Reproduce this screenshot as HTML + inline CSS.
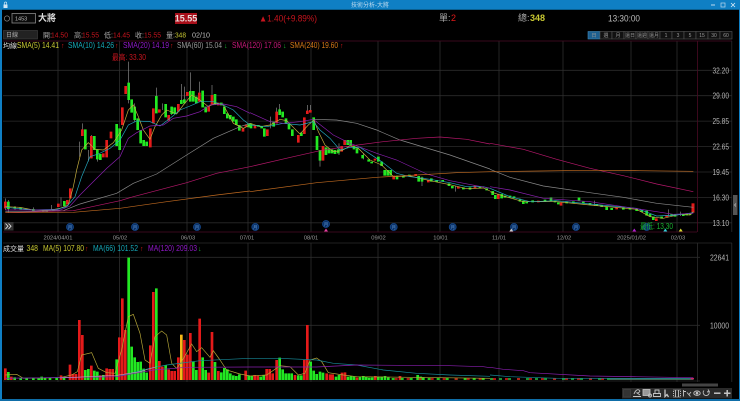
<!DOCTYPE html>
<html><head><meta charset="utf-8"><style>
html,body{margin:0;padding:0;background:#000;width:740px;height:401px;overflow:hidden}
svg{display:block;filter:blur(.3px)}
text{font-family:"Liberation Sans","Noto Sans CJK TC",sans-serif;font-size:8px}
.a{fill:#aaa}.r{fill:#c8141e}.y{fill:#c8c832}
.b text{font-size:5px;fill:#999}
.d text{font-size:5.8px;fill:#999}
.p text{font-size:8px;fill:#b4b4b4}
.m text{font-size:4.5px;fill:#5a90cc}
.f{fill:none}
</style></head><body>
<svg width="740" height="401" viewBox="0 0 740 401" xmlns="http://www.w3.org/2000/svg">
<rect width="740" height="401" fill="#000"/>
<!-- window chrome -->
<rect width="740" height="10" fill="#0f7fc4"/>
<rect y="9" width="740" height="1" fill="#0a5f90"/>
<rect y="0" width="2" height="401" fill="#0f7fc4"/>
<rect x="739" y="0" width="1" height="401" fill="#0f7fc4"/>
<rect y="399" width="740" height="2" fill="#0f6ea8"/>
<rect x="3.5" y="4.5" width="4" height="3.5" fill="#cfe6f5"/>
<path d="M4.3 4.5V3.2a1.2 1.2 0 0 1 2.4 0V4.5" class="f" stroke="#cfe6f5" stroke-width=".7"/>
<text x="370" y="7.2" text-anchor="middle" style="font-size:6px" fill="#bcd9ee">技術分析-大將</text>
<path d="M711 5h4" stroke="#bcd9ee"/><rect x="721" y="3" width="4" height="4" class="f" stroke="#bcd9ee" stroke-width=".7"/><path d="M731 3l4 4M735 3l-4 4" stroke="#dcecf7" stroke-width=".8"/>
<!-- row 1 -->
<circle cx="7" cy="18.5" r="2.6" class="f" stroke="#888" stroke-width=".7"/>
<rect x="12" y="13.5" width="23.5" height="9.5" fill="#0a0a0a" stroke="#888" stroke-width=".8"/>
<text x="15" y="20.5" style="font-size:5.5px" fill="#bbb">1453</text>
<text x="38" y="21" style="font-size:9px;font-weight:bold" fill="#ddd">大將</text>
<rect x="175" y="13" width="22" height="11" fill="#a80f1a"/>
<text x="186" y="21.5" text-anchor="middle" style="font-size:9px;font-weight:bold" fill="#e8d8d8">15.55</text>
<text x="259" y="21.5" style="font-size:9px" class="r" textLength="58" lengthAdjust="spacingAndGlyphs">▲1.40(+9.89%)</text>
<text x="439" y="21" style="font-size:9px" class="a">單:</text><text x="451" y="21" style="font-size:9px" fill="#e01818">2</text>
<text x="518" y="21" style="font-size:9px" class="a">總:</text><text x="530" y="21" style="font-size:9px;font-weight:bold" class="y">348</text>
<text x="608" y="21.5" style="font-size:9px" fill="#bbb" textLength="32" lengthAdjust="spacingAndGlyphs">13:30:00</text>
<!-- row 2 -->
<rect x="3.5" y="30.5" width="34" height="8.5" fill="#222" stroke="#444" stroke-width=".6"/>
<text x="6" y="37" style="font-size:6px" fill="#aaa">日線</text>
<text x="43" y="37.5" style="font-size:7px" class="a">開:</text><text x="51" y="37.5" style="font-size:7px" class="r" textLength="17" lengthAdjust="spacingAndGlyphs">14.50</text>
<text x="74" y="37.5" style="font-size:7px" class="a">高:</text><text x="82" y="37.5" style="font-size:7px" class="r" textLength="17" lengthAdjust="spacingAndGlyphs">15.55</text>
<text x="104" y="37.5" style="font-size:7px" class="a">低:</text><text x="113" y="37.5" style="font-size:7px" class="r" textLength="17" lengthAdjust="spacingAndGlyphs">14.45</text>
<text x="135" y="37.5" style="font-size:7px" class="a">收:</text><text x="144" y="37.5" style="font-size:7px" class="r" textLength="17" lengthAdjust="spacingAndGlyphs">15.55</text>
<text x="166" y="37.5" style="font-size:7px" class="a">量:</text><text x="175" y="37.5" style="font-size:7px" class="y" textLength="11" lengthAdjust="spacingAndGlyphs">348</text>
<text x="192" y="37.5" style="font-size:7px" fill="#bbb" textLength="18" lengthAdjust="spacingAndGlyphs">02/10</text>
<!-- range buttons -->
<g fill="#111" stroke="#555" stroke-width=".6">
<rect x="588" y="31.5" width="12" height="7.5" fill="#1d5f8f" stroke="#3f88b8"/><rect x="600" y="31.5" width="12" height="7.5"/><rect x="612" y="31.5" width="12" height="7.5"/><rect x="624" y="31.5" width="12" height="7.5"/><rect x="636" y="31.5" width="12" height="7.5"/><rect x="648" y="31.5" width="12" height="7.5"/><rect x="660" y="31.5" width="12" height="7.5"/><rect x="672" y="31.5" width="12" height="7.5"/><rect x="684" y="31.5" width="12" height="7.5"/><rect x="696" y="31.5" width="12" height="7.5"/><rect x="708" y="31.5" width="12" height="7.5"/><rect x="720" y="31.5" width="12" height="7.5"/>
</g>
<g text-anchor="middle" class="b">
<text x="594" y="37.2">日</text><text x="606" y="37.2">週</text><text x="618" y="37.2">月</text><text x="630" y="37.2">還日</text><text x="642" y="37.2">還週</text><text x="654" y="37.2">還月</text><text x="666" y="37.2">1</text><text x="678" y="37.2">3</text><text x="690" y="37.2">5</text><text x="702" y="37.2">15</text><text x="714" y="37.2">30</text><text x="726" y="37.2">60</text>
</g>
<!-- grid -->
<path d="M3 70.3H732M3 95.7H732M3 121.1H732M3 146.6H732M3 172H732M3 197.4H732M3 222.8H732M3 257.3H700M3 325.3H700" stroke="#2b2b2b" stroke-width=".8"/>
<path d="M58 41V232M119.5 41V232M187 41V232M248 41V232M311 41V232M378 41V232M440 41V232M499 41V232M563 41V232M631 41V232M677 41V232M58 243V382M119.5 243V382M187 243V382M248 243V382M311 243V382M378 243V382M440 243V382M499 243V382M563 243V382M631 243V382M677 243V382" stroke="#333" stroke-width=".7"/>
<path d="M3 41H732M3 232H697M697.5 41V232" stroke="#4a0b24" stroke-width=".8"/>
<path d="M697.5 243V382M3 243H732M731.8 41V232M731.8 243V382M3 381H700" stroke="#2c2c2c" stroke-width=".8"/>
<!-- legend -->
<text x="3" y="48" style="font-size:7px" fill="#ddd">均線:</text>
<text x="17" y="48" class="y" textLength="42" lengthAdjust="spacingAndGlyphs">SMA(5) 14.41</text><text x="61" y="48" style="font-size:7px" fill="#d01818">↑</text>
<text x="68" y="48" fill="#16a8b8" textLength="46" lengthAdjust="spacingAndGlyphs">SMA(10) 14.26</text><text x="115" y="48" style="font-size:7px" fill="#d01818">↑</text>
<text x="123" y="48" fill="#9018c8" textLength="46" lengthAdjust="spacingAndGlyphs">SMA(20) 14.19</text><text x="170" y="48" style="font-size:7px" fill="#d01818">↑</text>
<text x="177" y="48" fill="#999" textLength="45" lengthAdjust="spacingAndGlyphs">SMA(60) 15.04</text><text x="224" y="48" style="font-size:7px" fill="#18b030">↓</text>
<text x="232" y="48" fill="#c81878" textLength="49" lengthAdjust="spacingAndGlyphs">SMA(120) 17.06</text><text x="283" y="48" style="font-size:7px" fill="#18b030">↓</text>
<text x="290" y="48" fill="#d87818" textLength="48" lengthAdjust="spacingAndGlyphs">SMA(240) 19.60</text><text x="340" y="48" style="font-size:7px" fill="#d01818">↑</text>
<text x="112" y="60" class="r" textLength="34" lengthAdjust="spacingAndGlyphs">最高: 33.30</text>
<!-- price axis -->
<g class="p"><text x="712.500" y="73.300" textLength="16.500" lengthAdjust="spacingAndGlyphs">32.20</text><text x="712.500" y="98.700" textLength="16.500" lengthAdjust="spacingAndGlyphs">29.00</text><text x="712.500" y="124.100" textLength="16.500" lengthAdjust="spacingAndGlyphs">25.85</text><text x="712.500" y="149.600" textLength="16.500" lengthAdjust="spacingAndGlyphs">22.65</text><text x="712.500" y="175" textLength="16.500" lengthAdjust="spacingAndGlyphs">19.45</text><text x="712.500" y="200.400" textLength="16.500" lengthAdjust="spacingAndGlyphs">16.30</text><text x="712.500" y="225.800" textLength="16.500" lengthAdjust="spacingAndGlyphs">13.10</text></g>
<g class="d" text-anchor="middle"><text x="58" y="239.300">2024/04/01</text><text x="120" y="239.300">05/02</text><text x="188" y="239.300">06/03</text><text x="247" y="239.300">07/01</text><text x="311" y="239.300">08/01</text><text x="378.500" y="239.300">09/02</text><text x="440.500" y="239.300">10/01</text><text x="499" y="239.300">11/01</text><text x="564" y="239.300">12/02</text><text x="631.500" y="239.300">2025/01/02</text><text x="678" y="239.300">02/03</text></g>
<!-- candles zone 1 -->
<g transform="translate(0,60) scale(.33333)" fill="none">
<path stroke="#8a8a8a" stroke-width="2" d="M16 415V450M25 420V458M45 438V450M100 442V455M155 435V450M183 412V440M238 245V290M247 190V210M265 270V305M274 225V295M292 268V305M386 5V70M386 118V130M469 83V110M487 130V150M515 140V165M544 72V122M553 80V120M571 37V95M598 65V100M636 75V105M404 130V185"/>
<path stroke="#e41a1a" stroke-width="8" d="M16 425V445M175 431V441M202 420V434M211 385V415M247 208V228M274 228V295M310 280V292M320 240V292M333 215V235M367 142V195M377 78V102M451 205V262M460 145V190M478 148V158M506 165V182M535 132V155M562 96V108M598 98V125M626 140V155M636 105V135M729 205V215M738 195V200M655 128V136"/>
<path stroke="#22e822" stroke-width="8" d="M25 425V447M44 441V446M62 443V448M80 446V450M100 447V453M130 450V456M140 450V456M160 447V452M193 423V438M256 208V268M283 228V270M292 268V298M301 282V300M350 192V258M359 205V270M386 68V120M395 118V158M404 140V180M413 175V210M422 210V250M431 240V258M440 245V258M469 108V160M497 132V172M515 140V162M524 142V162M544 120V132M553 118V130M571 93V125M580 93V125M589 110V130M608 92V142M617 140V157M645 102V135M664 128V136M673 140V162M682 160V175M691 165V178M700 170V185M709 178V195M718 195V212M746 190V202"/>
<path stroke="#c8b040" stroke-width="2" d="M16 440L60 442L100 450L140 452L180 445L205 435L220 380L230 330L245 270L265 248L285 268L310 270L340 248L365 210L385 150L400 135L415 170L430 210L450 238L465 200L485 165L500 150L530 162L550 135L575 105L600 120L625 140L645 130L670 135L700 190L730 205L750 195"/>
<path stroke="#23a8c0" stroke-width="2" d="M16 442L100 450L170 448L200 440L225 410L245 350L270 290L295 282L330 265L360 240L385 195L410 183L450 185L480 198L510 175L540 150L570 138L600 125L640 125L670 135L700 150L730 180L750 195"/>
<path stroke="#8a1fb0" stroke-width="2" d="M16 450L180 450L210 438L240 405L280 365L320 325L360 290L385 235L410 218L450 198L490 195L520 175L560 168L600 155L630 135L670 132L710 140L750 160"/>
<path stroke="#8a8a8a" stroke-width="2" d="M16 455L190 452L240 432L350 400L400 370L470 342L560 285L640 235L720 200L750 190"/>
<path stroke="#b8186c" stroke-width="2" d="M16 458L220 452L360 422L400 410L560 368L650 340L750 320"/>
<path stroke="#c06a20" stroke-width="2" d="M16 458L220 457L360 445L500 425L650 405L750 393"/>
</g>
<!-- candles zone 2 -->
<g transform="translate(250,60) scale(.33333)" fill="none">
<path stroke="#8a8a8a" stroke-width="2" d="M62 170V205M80 143V190M89 132V150M172 135V155M181 135V155M210 300V320M267 250V285M340 280V298M516 350V378M616 378V395"/>
<path stroke="#e41a1a" stroke-width="8" d="M15 195V205M52 208V228M80 155V190M145 225V248M163 172V222M172 152V162M181 150V158M219 258V302M275 258V275M284 240V255M375 296V302M431 347V358M497 342V348M535 360V367M625 380V386M675 377V384"/>
<path stroke="#22e822" stroke-width="8" d="M3 190V205M25 195V200M35 198V205M43 205V230M71 185V200M89 148V165M98 155V172M108 175V192M117 192V208M127 208V228M154 218V228M191 172V210M201 228V270M210 270V302M228 262V285M237 265V280M246 268V280M255 270V282M265 268V280M293 240V255M302 240V258M312 258V268M321 265V280M338 285V295M356 298V305M365 305V310M385 290V305M395 305V318M404 330V347M413 330V347M422 330V347M441 347V358M460 347V353M478 344V350M506 348V365M516 352V365M544 355V365M560 360V366M578 360V365M597 370V378M607 378V385M640 382V388M660 382V389M690 379V385M710 385V391"/>
<path stroke="#c8b040" stroke-width="2" d="M0 190L30 200L60 195L90 178L110 182L150 222L175 195L192 180L205 215L225 255L250 275L275 272L300 258L325 265L360 300L395 315L430 350L480 348L540 362L600 374L650 386L700 384L720 393"/>
<path stroke="#23a8c0" stroke-width="2" d="M0 195L50 200L100 190L150 195L190 185L210 210L240 235L270 270L300 262L330 262L395 305L440 340L480 350L540 358L600 368L650 380L700 380L720 385"/>
<path stroke="#8a1fb0" stroke-width="2" d="M0 158L60 185L100 190L150 185L190 178L250 225L300 250L380 280L440 300L530 342L600 362L720 385"/>
<path stroke="#8a8a8a" stroke-width="2" d="M190 178L260 180L320 190L380 210L450 240L600 285L720 327"/>
<path stroke="#b8186c" stroke-width="2" d="M0 320L130 290L210 272L300 258L400 245L500 235L570 231L650 238L720 252"/>
<path stroke="#c06a20" stroke-width="2" d="M0 395L200 368L380 352L500 345L620 338L720 335"/>
</g>
<!-- candles zone 3 -->
<g transform="translate(490,60) scale(.33333)" fill="none">
<path stroke="#8a8a8a" stroke-width="2" d="M313 422V438M535 448V470M572 455V468M90 415V425"/>
<path stroke="#e41a1a" stroke-width="8" d="M25 403V417M145 422V427M213 428V437M380 443V448M499 475V483M530 465V471"/>
<path stroke="#22e822" stroke-width="8" d="M8 393V405M16 405V417M35 402V415M45 407V413M60 407V413M72 409V415M90 418V425M100 422V432M110 424V430M128 421V427M165 419V425M183 413V423M195 421V427M205 427V433M230 424V430M250 424V430M267 413V422M280 425V431M300 429V435M320 432V438M335 435V441M350 440V450M365 444V450M400 443V449M420 443V449M440 447V453M455 450V456M470 452V467M480 462V470M490 470V480M515 470V476M545 462V468M555 462V470M580 462V468M590 460V466M600 459V465"/>
<path stroke="#e41a1a" stroke-width="9" d="M609 430V458"/>
<path stroke="#c8b040" stroke-width="2" d="M0 395L40 408L100 425L200 425L300 435L440 448L480 470L520 475L570 463L600 465L610 455"/>
<path stroke="#23a8c0" stroke-width="2" d="M0 385L60 410L120 425L200 422L300 432L440 445L500 468L560 465L610 458"/>
<path stroke="#8a1fb0" stroke-width="2" d="M0 380L60 390L160 415L300 425L400 440L500 455L550 463L610 460"/>
<path stroke="#8a8a8a" stroke-width="2" d="M0 328L60 352L160 378L300 398L400 412L500 430L610 442"/>
<path stroke="#b8186c" stroke-width="2" d="M0 250L100 268L200 298L300 325L400 347L500 372L610 395"/>
<path stroke="#c06a20" stroke-width="2" d="M0 335L150 333L300 331L450 332L610 334"/>
</g>
<!-- markers -->
<g fill="#0b3268" stroke="#154a90" stroke-width=".8">
<circle cx="70" cy="227" r="3.500"/><circle cx="135" cy="227" r="3.500"/><circle cx="197" cy="227" r="3.500"/><circle cx="255.300" cy="227" r="3.500"/><circle cx="326" cy="224" r="3.500"/><circle cx="393.700" cy="227" r="3.500"/><circle cx="452.700" cy="227" r="3.500"/><circle cx="514" cy="227" r="3.500"/><circle cx="576" cy="227" r="3.500"/><circle cx="646.700" cy="227" r="3.500"/>
</g>
<g text-anchor="middle" class="m">
<text x="70" y="228.800">月</text><text x="135" y="228.800">月</text><text x="197" y="228.800">月</text><text x="255.300" y="228.800">月</text><text x="326" y="225.800">月</text><text x="393.700" y="228.800">月</text><text x="452.700" y="228.800">月</text><text x="514" y="228.800">月</text><text x="576" y="228.800">月</text>
</g>
<text x="640" y="229" fill="#18b030" textLength="33" lengthAdjust="spacingAndGlyphs">最低: 13.30</text>
<path d="M326 228.500l-2 3h4z" fill="#e040a0"/><path d="M511.300 228.500l-2 3h4z" fill="#ccc"/><path d="M634.300 228.500l-2 3h4z" fill="#b020d0"/><path d="M665.300 228.500l-2 3h4z" fill="#30d0d8"/><path d="M680.700 228.500l-2 3h4z" fill="#d8d830"/>
<rect x="4" y="222" width="9.500" height="8.500" fill="#333"/>
<path d="M5.500 223.500l2.500 2.700l-2.500 2.700M8.500 223.500l2.500 2.700l-2.500 2.700" class="f" stroke="#ddd" stroke-width=".9"/>
<!-- volume legend -->
<text x="3" y="251" style="font-size:7px" fill="#ddd">成交量</text>
<text x="26.500" y="251" class="y" textLength="11.500" lengthAdjust="spacingAndGlyphs">348</text>
<text x="43" y="251" class="y" textLength="41" lengthAdjust="spacingAndGlyphs">MA(5) 107.80</text><text x="85" y="251" style="font-size:7px" fill="#d01818">↑</text>
<text x="93" y="251" fill="#16a8b8" textLength="45" lengthAdjust="spacingAndGlyphs">MA(66) 101.52</text><text x="140" y="251" style="font-size:7px" fill="#d01818">↑</text>
<text x="148" y="251" fill="#9018c8" textLength="49" lengthAdjust="spacingAndGlyphs">MA(120) 209.03</text><text x="198" y="251" style="font-size:7px" fill="#18b030">↓</text>
<text x="710" y="260.300" fill="#b4b4b4" textLength="19" lengthAdjust="spacingAndGlyphs">22641</text><text x="710" y="328.300" fill="#b4b4b4" textLength="19" lengthAdjust="spacingAndGlyphs">10000</text>
<!-- volume zone 1 -->
<g transform="translate(0,220) scale(.33333)" fill="none">
<path stroke="#e41a1a" stroke-width="8" d="M16 445V480M34 470V480M183 466V480M210 434V480M219 462V480M228 462V480M238 300V480M247 345V480M274 437V480M301 466V480M320 445V480M329 447V480M338 447V480M358 352V480M367 235V480M376 330V480M451 376V480M460 216V480M478 423V480M487 440V480M506 448V480M515 453V480M524 453V480M535 412V480M553 360V480M562 404V480M571 339V480M599 296V480M626 458V480M636 336V480M655 453V480M737 452V480"/>
<path stroke="#22e822" stroke-width="8" d="M25 456V480M125 470V480M44 472V480M62 475V480M80 475V480M100 475V480M116 475V480M135 474V480M150 474V480M170 474V480M192 472V480M256 450V480M265 447V480M283 452V480M292 455V480M310 465V480M350 418V480M386 113V480M395 380V480M404 412V480M413 426V480M422 425V480M431 446V480M440 458V480M469 205V480M497 435V480M580 425V480M589 450V480M608 412V480M617 450V480M645 426V480M664 457V480M673 444V480M682 448V480M691 460V480M700 466V480M709 468V480M718 463V480M746 466V480"/>
<path stroke="#f5b818" stroke-width="8" d="M544 344V480"/>
<path stroke="#b8a838" stroke-width="2" d="M16 465L50 463L70 475L180 473L215 465L232 455L245 405L275 398L295 445L320 458L345 460L365 390L385 290L400 283L420 340L435 420L450 430L465 350L485 333L500 345L515 430L530 445L545 425L575 372L590 395L605 383L630 412L640 392L660 420L680 450L720 462L750 468"/>
<path stroke="#178a98" stroke-width="2" d="M16 475L350 470L450 445L500 435L600 422L750 415"/>
<path stroke="#8a1fb0" stroke-width="2" d="M16 475L350 470L460 450L560 442L750 441"/>
<path stroke="#e0a0c8" stroke-width="1.500" d="M180 474L350 466L420 455L470 440"/>
</g>
<!-- volume zone 2 -->
<g transform="translate(250,220) scale(.33333)" fill="none">
<path stroke="#e41a1a" stroke-width="8" d="M14 465V480M23 467V480M50 447V480M59 447V480M68 460V480M80 420V480M135 465V480M163 420V480M172 315V480M230 460V480M240 463V480M248 463V480M276 458V480M285 457V480M321 472V480M376 468V480M450 468V480"/>
<path stroke="#22e822" stroke-width="8" d="M5 468V480M32 470V480M41 465V480M89 413V480M98 448V480M107 460V480M116 460V480M125 460V480M145 466V480M154 466V480M182 425V480M191 452V480M200 462V480M210 455V480M219 458V480M258 470V480M267 465V480M294 470V480M303 468V480M312 470V480M330 470V480M340 468V480M349 470V480M358 473V480M367 472V480M385 470V480M395 470V480M405 468V480M415 472V480M503 465V480M512 470V480M520 472V480"/>
<path stroke="#22e822" stroke-width="5" stroke-dasharray="9 18" d="M425 477H750"/>
<path stroke="#c81818" stroke-width="5" stroke-dasharray="9 27" stroke-dashoffset="-9" d="M425 477H750"/>
<path stroke="#b8a838" stroke-width="2" d="M0 468L50 465L90 437L120 440L145 465L165 460L180 420L200 414L215 425L235 458L280 465L320 470L720 475"/>
<path stroke="#178a98" stroke-width="2" d="M0 415L90 415L200 420L250 430L320 435L400 450L500 460L600 465L720 469"/>
<path stroke="#8a1fb0" stroke-width="2" d="M0 441L200 441L320 435L600 437L700 440L720 443"/>
</g>
<!-- volume zone 3 -->
<g transform="translate(490,220) scale(.33333)" fill="none">
<path stroke="#22a838" stroke-width="5" stroke-dasharray="9 18" d="M0 477H360"/>
<path stroke="#c81818" stroke-width="5" stroke-dasharray="9 27" stroke-dashoffset="-9" d="M0 477H360"/>
<path stroke="#4a7a60" stroke-width="5" d="M360 477H610"/>
<path stroke="#178a98" stroke-width="2" d="M0 465L60 470L200 475L610 476"/>
<path stroke="#8a1fb0" stroke-width="2" d="M0 442L40 448L100 452L120 458L300 468L610 473"/>
<path stroke="#d02060" stroke-width="4" d="M602 476H612"/>
</g>
<!-- scrollbars -->
<rect x="733" y="195" width="4.500" height="20" fill="#555"/>
<path d="M736 203.500l-1.500 1.500l1.500 1.500" class="f" stroke="#ccc" stroke-width=".6"/>
<rect x="682" y="383.500" width="36" height="3" fill="#444"/>
<!-- toolbar -->
<rect x="622" y="388" width="110" height="10.500" fill="#2a2a2a"/>
<g fill="none" stroke="#c4c4c4" stroke-width=".9">
<rect x="623.500" y="389.500" width="7" height="7.500" fill="#333" stroke="#3d3d3d"/>
<path d="M633 396.500H641M634 394c1-3 3-5 5-4s0 3-2 3l3 2"/>
<rect x="643" y="389.500" width="7" height="6" fill="#999" stroke="#bbb"/><circle cx="650" cy="395.500" r="1.500"/>
<path d="M653.500 396.500H660.500V393.500H653.500ZM655 393V390H659V393"/>
<path d="M665 389.500V396.500L667 394.500L668.500 397" stroke-width="1.300"/>
<rect x="673.500" y="390" width="7" height="7" stroke-dasharray="1 1"/><path d="M675.500 390V397M678.500 390V397"/>
<path d="M683.500 396.500V390M683.500 391.500H686M687 392.500L690.500 396.500M689 394.500L691 392"/>
<ellipse cx="697" cy="393.200" rx="3.200" ry="2.200"/><circle cx="697" cy="393.200" r=".9" fill="#c4c4c4"/>
<path d="M704 390.500A3 3 0 1 0 709 391.500M708 389.500L709.300 391.500L707 392"/>
<path d="M714 393.200H720.500" stroke-width="1.500"/>
<path d="M724 393.200H730.500M727.200 390V396.500" stroke-width="1.500"/>
</g>
</svg>
</body></html>
